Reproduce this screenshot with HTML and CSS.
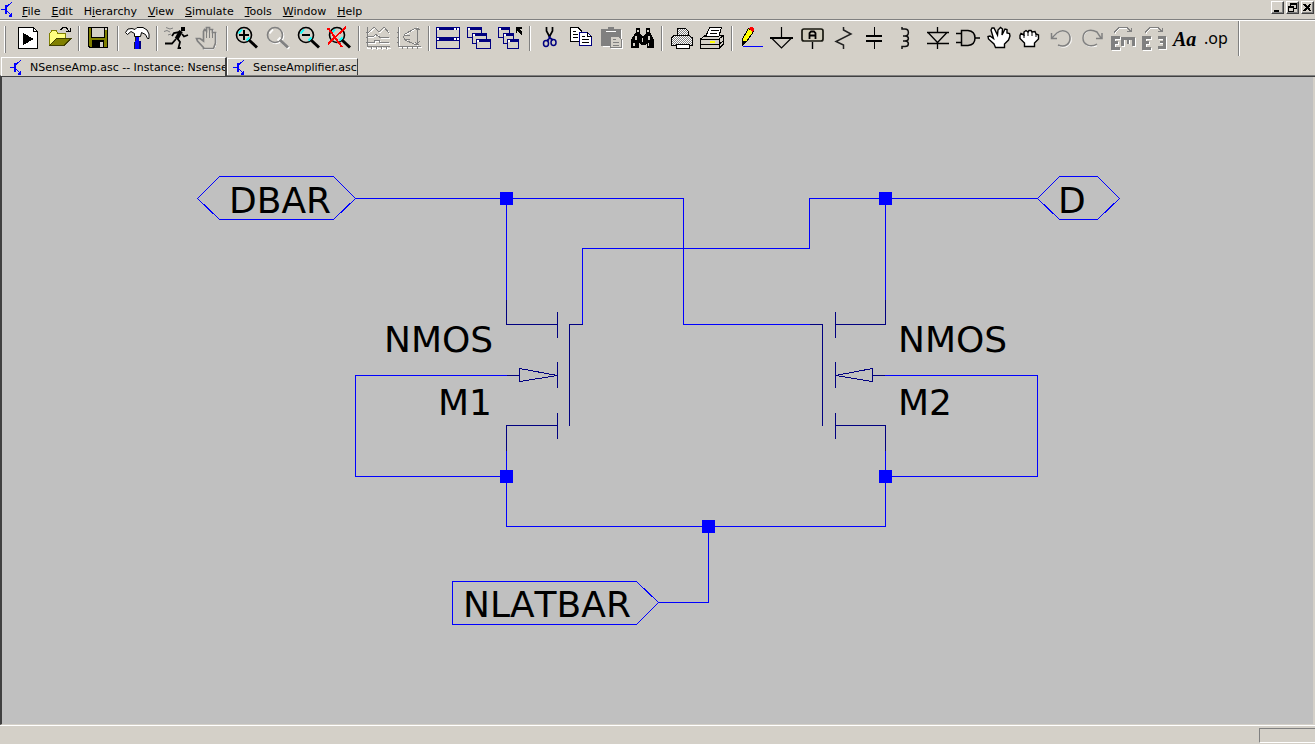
FILE: index.html
```html
<!DOCTYPE html>
<html lang="en">
<head>
<meta charset="utf-8">
<title>NSenseAmp.asc</title>
<link rel="stylesheet" href="styles.css">
</head>
<body>
<svg class="symbols" aria-hidden="true">
  <symbol id="logo" viewBox="0 0 14 17"><path d="M1 8.500H5M7 5.500L12 1M7 10L12 15" fill="none" stroke="#00f"/><path d="M5 4h2v9H5zM9 14H11V12H12V16H9Z" fill="#00f"/></symbol>
  <symbol id="lens" viewBox="0 0 25 24"><g shape-rendering="auto"><circle cx="10" cy="9" r="7.500" fill="#d4d0c8" stroke="currentColor" stroke-width="1.600"/><path d="M4.500 7.500L8 3.500M12.500 14.500L15.500 11.500" stroke="var(--glint)" stroke-width="1.800"/><path d="M15.500 14.500L23 21.500" stroke="currentColor" stroke-width="3"/></g></symbol>
  <symbol id="lettere" viewBox="0 0 9 14"><path d="M0 0H9V3H4V5H7V8H4V11H9V14H0Z"/></symbol>
</svg>
<header class="menubar">
  <svg class="logo" aria-hidden="true"><use href="#logo"/></svg>
  <nav class="menus">
    <button class="menu"><u>F</u>ile</button>
    <button class="menu"><u>E</u>dit</button>
    <button class="menu">H<u>i</u>erarchy</button>
    <button class="menu"><u>V</u>iew</button>
    <button class="menu"><u>S</u>imulate</button>
    <button class="menu"><u>T</u>ools</button>
    <button class="menu"><u>W</u>indow</button>
    <button class="menu"><u>H</u>elp</button>
  </nav>
  <div class="controls">
    <button class="control" aria-label="Minimize"><svg viewBox="0 0 11 11"><path d="M2 8h5v2H2z"/></svg></button>
    <button class="control" aria-label="Restore"><svg viewBox="0 0 11 11"><path d="M3 1h7v6H7v3H1V4h2zM4 3v1h3v2h2V3zM2 6v3h4V6z" fill-rule="evenodd"/></svg></button>
    <button class="control" aria-label="Close"><svg viewBox="0 0 11 11"><path d="M2 2L8.500 9M8.500 2L2 9" stroke="#000" stroke-width="2"/></svg></button>
  </div>
</header>

<div class="toolbar" role="toolbar">
  <span class="grip"></span>
  <button class="tool" aria-label="Run"><svg viewBox="0 0 25 24"><path d="M2.500 1.500H17.500L21.500 5.500V22.500H2.500Z" fill="#fff" stroke="#000"/><path d="M17.500 1.500V5.500H21.500" fill="none" stroke="#000"/><path d="M7 7L18 13L7 19Z"/></svg></button>
  <button class="tool" aria-label="Open"><svg viewBox="0 0 25 24"><path d="M2.500 19V7.500L5 4.500H9L11 7.500H18V13" fill="#ffff80" stroke="#808000"/><path d="M2.500 19.500L9.500 12.500H24L17 19.500Z" fill="#808000" stroke="#404000"/><path d="M13.500 4L16 1.500H19L22.500 5.500M19 5.500H23.500V2" fill="none" stroke="#000"/></svg></button>
  <span class="separator"></span>
  <button class="tool" aria-label="Save"><svg viewBox="0 0 25 24"><path d="M2.500 1.500H21.500V21.500H4L2.500 20Z" fill="#808000" stroke="#000"/><path d="M5.500 1.500H18.500V11.500H5.500Z" fill="#d4d0c8" stroke="#000"/><path d="M6 14H18V21H6Z"/><path d="M14 16h3v5h-3zM19 2h2v2h-2z" fill="#d4d0c8"/></svg></button>
  <span class="separator"></span>
  <button class="tool" aria-label="Control panel"><svg viewBox="0 0 25 24"><g shape-rendering="auto"><path d="M10 9H12V23H9V16H10Z" fill="#222"/><path d="M11 10H14V15H16V23H10V15H11Z" fill="#00f"/><path d="M14 15H16V23H14Z" fill="#000080"/><path d="M.5 6.500L3 3L7 2.500L10 3.500L12 1.500H18L22 4L24 8V12.500H22.500L20.500 8.500L16.500 6.500L15.500 10.500H9.500V7.500L6 5.500L2.500 8.500Z" fill="#fff" stroke="#000"/></g></svg></button>
  <span class="separator"></span>
  <button class="tool" aria-label="Simulate"><svg viewBox="0 0 25 24"><g shape-rendering="auto"><path d="M17 1h4v4h-4z"/><path d="M17 5L12.500 13" stroke="#000" stroke-width="4"/><path d="M16 6L10 7L8 10M18 8L20 10.500L24 9M12 13L8 17.500H1M13 12L16 16L14.500 22H17" fill="none" stroke="#000" stroke-width="1.800"/><path d="M2 1.500L6 3L9 2M0 5.500L3 4.500L6 6M4 9L7 8" fill="none" stroke="#808080"/></g></svg></button>
  <button class="tool" aria-label="Halt"><svg viewBox="0 0 25 24"><path d="M9 22L4 16L3 13H6L9 16V6L10 4L12 6V3H15V4H18V7H21V18L19 23H9Z" fill="none" stroke="#fff"/><path d="M8.500 21.500L2.500 15L1.500 12.500H5L8.500 15V5.500L9.500 3.500L11.500 5V1.500H14.500V3.500H17.500V6.500H20.500V17L18.500 22.500H8.500Z" fill="#d4d0c8" stroke="#808080" stroke-width="1.700" shape-rendering="auto"/><path d="M11.500 5V12M14.500 3V12M17.500 6V12" stroke="#808080"/></svg></button>
  <span class="separator"></span>
  <button class="tool" aria-label="Zoom in"><svg viewBox="0 0 25 24"><use href="#lens"/><path d="M5 8H15V10H5ZM9 4H11V14H9Z"/></svg></button>
  <button class="tool off" aria-label="Pan"><svg viewBox="0 0 25 24"><use class="shine" href="#lens" x="1" y="1"/><use href="#lens"/></svg></button>
  <button class="tool" aria-label="Zoom out"><svg viewBox="0 0 25 24"><use href="#lens"/><path d="M6 8H14V10H6Z"/></svg></button>
  <button class="tool" aria-label="Zoom full extents"><svg viewBox="0 0 25 24"><use href="#lens"/><path d="M1 2L15 21M19 1L1 18M0 3H3" fill="none" stroke="#f00" stroke-width="2"/></svg></button>
  <span class="separator"></span>
  <button class="tool" aria-label="Autorange"><svg viewBox="0 0 25 24"><path class="lit" d="M1.500 2V22.500H25M2 8L9 2L14 7L19 2L24 8M2 11H8L11 9L15 12H24M2 17H9V15H14V17H24M6 20V24M11 20V24M16 20V24M21 20V24"/><path class="dim" d="M1.500 1V20.500H24M2 7L8 1L13 6L18 1L23 7M2 10.500H7L10 8.500L14 11.500H23M2 16.500H8.500V14.500H13.500V16.500H23M0 6.500H2M0 11.500H2M0 16.500H2M5.500 20V23M10.500 20V23M15.500 20V23M20.500 20V23"/></svg></button>
  <button class="tool" aria-label="Smith chart"><svg viewBox="0 0 25 24"><path class="lit" d="M2.500 1V21.500H25M8 9L20 2V19L8 14"/><path class="dim" d="M1.500 1V20.500H24M20.500 2V18M22 2.500H18L8 8L6.500 11L8 14L18 18.500H22M8 9.500H13M8 13.500H13M19 4L20 2L23 4M18 16L20 18L23 15M0 6.500H2M0 11.500H2M0 16.500H2M5.500 20V23M10.500 20V23M15.500 20V23M20.500 20V23"/></svg></button>
  <span class="separator"></span>
  <button class="tool" aria-label="Tile windows"><svg viewBox="0 0 25 24"><path d="M0 1H24V23H0ZM1 4V11H23V4ZM1 15V22H23V15Z" fill="#000080" fill-rule="evenodd"/><path d="M1 2h2v2H1zM18 2h2v2h-2zM21 2h2v2h-2zM1 12h2v2H1zM18 12h2v2h-2zM21 12h2v2h-2z" fill="#fff"/></svg></button>
  <button class="tool" aria-label="Cascade windows"><svg viewBox="0 0 25 24"><path d="M.5 1.500H14.500V11.500H.5Z" class="win"/><path d="M0 1H15V4H0Z" class="winbar"/><path d="M5.500 7.500H19.500V17.500H5.500Z" class="win"/><path d="M5 7H20V10H5Z" class="winbar"/><path d="M9.500 13.500H23.500V22.500H9.500Z" class="win"/><path d="M9 13H24V16H9Z" class="winbar"/><path d="M1 2h2v2H1zM6 8h2v2H6zM10 14h2v2h-2z" fill="#fff"/></svg></button>
  <button class="tool" aria-label="Close all windows"><svg viewBox="0 0 25 24"><path d="M.5 1.500H11.500V11.500H.5Z" class="win"/><path d="M0 1H12V4H0Z" class="winbar"/><path d="M5.500 7.500H15.500V17.500H5.500Z" class="win"/><path d="M5 7H16V10H5Z" class="winbar"/><path d="M9.500 13.500H20.500V22.500H9.500Z" class="win"/><path d="M9 13H21V16H9Z" class="winbar"/><path d="M1 2h2v2H1zM6 8h2v2H6zM10 14h2v2h-2z" fill="#fff"/><path d="M18 1H24V3H21L24 6V9H23L19 5V7H18Z"/></svg></button>
  <span class="separator"></span>
  <button class="tool" aria-label="Cut"><svg viewBox="0 0 25 24"><g fill="none" shape-rendering="auto"><path d="M9.500 1V5L13 11.500M15.500 1V5L12 11.500" stroke="#000" stroke-width="1.700"/><path d="M12.500 10V13M12 13L10 15M13 12L16 14" stroke="#000080" stroke-width="2"/><ellipse cx="9" cy="17.500" rx="2.500" ry="3" stroke="#000080" stroke-width="1.500"/><ellipse cx="16.500" cy="16.500" rx="2.500" ry="3" stroke="#000080" stroke-width="1.500"/></g></svg></button>
  <button class="tool" aria-label="Copy"><svg viewBox="0 0 25 24"><path d="M2.500 1.500H10L13.500 5V15.500H2.500Z" fill="#fff" stroke="#000"/><path d="M5 5.500H8M5 8.500H10M5 11.500H10" stroke="#000"/><path d="M11.500 6.500H19.500L23.500 10.500V19.500H11.500Z" fill="#fff" stroke="#000080"/><path d="M19.500 6V10.500H24M14 10.500H17M14 13.500H21M14 16.500H21" fill="none" stroke="#000"/></svg></button>
  <button class="tool" aria-label="Paste"><svg viewBox="0 0 25 24"><path d="M4 4H23V21H4Z" fill="#fff"/><path d="M2 3H9V1H15V3H22V20H2Z" fill="#808080"/><path d="M7 5.500H17" stroke="#fff"/><path d="M12.500 11.500H20L23.500 15V22.500H12.500Z" fill="#d4d0c8" stroke="#fff"/><path d="M11.500 10.500H20L22.500 14V21.500H11.500Z" fill="#d4d0c8" stroke="#808080"/><path d="M14 13.500H17M14 16.500H20M14 19.500H20" stroke="#808080"/></svg></button>
  <button class="tool" aria-label="Find"><svg viewBox="0 0 25 24"><path d="M6 2H10V7L12 10H14L16 7V2H20V6L22 10L24 14V22H17V17L15 19H11L9 17V22H1V14L4 9L6 6Z"/><path d="M7 4h2v2H7zM17 4h2v2h-2zM5 10h2v4H5zM18 10h2v4h-2zM3 17h2v3H3zM12 12h1v4h-1zM18 17h1v3h-1z" fill="#d4d0c8"/></svg></button>
  <span class="separator"></span>
  <button class="tool" aria-label="Print preview"><svg viewBox="0 0 25 24"><defs><pattern id="dots" width="2" height="2" patternUnits="userSpaceOnUse"><path d="M0 0h2v2H0z" fill="#fff"/><path d="M0 0h1v1H0zM1 1h1v1H1z" fill="#808080"/></pattern></defs><path d="M8.500 9V2.500H16.500L19.500 5.500V9M7.500 9.500H20.500L23.500 12V19.500H20V18H7V19.500H2.500V12L5 9.500Z" fill="url(#dots)" stroke="#000"/><path d="M7.500 18.500H20.500V22.500H7.500Z" fill="#fff" stroke="#000"/></svg></button>
  <button class="tool" aria-label="Print"><svg viewBox="0 0 25 24"><path d="M.5 13L5 9.500H23.500V18L19 22.500H.5Z" fill="#d4d0c8" stroke="#000"/><path d="M6 10L9.500 1.500H21.500L19 10Z" fill="#fff" stroke="#000"/><path d="M11 4.500H19M10 7.500H17M1 13.500H19.500V22M19 13L23.500 9.500M1 18.500H19L23 15" fill="none" stroke="#000"/><path d="M10 15h5v2h-5z" fill="#ff0"/></svg></button>
  <span class="separator"></span>
  <button class="tool" aria-label="Wire"><svg viewBox="0 0 25 24"><path d="M4 20.500H24" stroke="#00f"/><path d="M3.500 18.500V13L9.500 2.500L14.500 5.500L8 15Z" fill="#ff0" stroke="#000"/><path d="M3 14L8 16L3 20Z"/><path d="M10 2L12 1H14L15 3V5L13 6Z" fill="#f00"/></svg></button>
  <button class="tool" aria-label="Ground"><svg viewBox="0 0 25 24"><path d="M11.500 1V12M1 11.500L11.500 22L22 11.500" fill="none" stroke="#000" stroke-width="1.200" shape-rendering="auto"/><path d="M0 11h23v2H0z"/></svg></button>
  <button class="tool" aria-label="Label net"><svg viewBox="0 0 25 24"><g shape-rendering="auto"><path d="M11.500 16V23" stroke="#000" stroke-width="1.400"/><rect x="1" y="3" width="21" height="12" rx="2" fill="#d0ccbc" stroke="#181810" stroke-width="1.700"/><path d="M8.500 13V7L10 5.500H13L14.500 7V13M8.500 9.500H14.500" fill="none" stroke="#000" stroke-width="1.800"/></g></svg></button>
  <button class="tool" aria-label="Resistor"><svg viewBox="0 0 25 24"><path d="M11.500 1V4L19 8L4 15.500L11.500 19V23" fill="none" stroke="#222" stroke-width="1.500" shape-rendering="auto"/></svg></button>
  <button class="tool" aria-label="Capacitor"><svg viewBox="0 0 25 24"><path d="M11 1h1v8h-1zM3 9h16v2H3zM3 14h16v2H3zM11 16h1v7h-1z"/></svg></button>
  <button class="tool" aria-label="Inductor"><svg viewBox="0 0 25 24"><path d="M8 1V3H11C15.500 3 15.500 10 11 10H9M11 10C15.500 10 15.500 15 11 15H9M11 15C15.500 15 15.500 20.500 11 20.500H8V23" fill="none" stroke="#111" stroke-width="1.500" shape-rendering="auto"/></svg></button>
  <button class="tool" aria-label="Diode"><svg viewBox="0 0 25 24"><path d="M12.500 1V6M2 6.500H24M3 6.500L12.500 16.500L22 6.500M2 17.500H24M12.500 17V23" fill="none" stroke="#000" stroke-width="1.300" shape-rendering="auto"/></svg></button>
  <button class="tool" aria-label="Component"><svg viewBox="0 0 25 24"><g shape-rendering="auto"><path d="M0 7.500H5M0 16.500H5M19 12H24" stroke="#000" stroke-width="1.500"/><path d="M5.500 4.500H12C17 5 19 8 19 12C19 16 17 19 12 19.500H5.500Z" fill="#c8c4bc" stroke="#000" stroke-width="1.500"/></g></svg></button>
  <button class="tool" aria-label="Move"><svg viewBox="0 0 25 24"><path d="M8.500 21.500L7 18L1.500 13L1 10.500L3 10L6.500 12.500L4 4L5 2H7L10.500 9L11 4L13.500 1.500L15.500 3L15 9L18 3L20 3.500V7L22.500 7.500L23 10L21.500 14L17.500 18V21.500Z" fill="#fff" stroke="#000" stroke-width="1.400" shape-rendering="auto"/></svg></button>
  <button class="tool" aria-label="Drag"><svg viewBox="0 0 25 24"><g shape-rendering="auto" stroke="#000"><path d="M6.500 20.500V17L2 12.500V9.500L3 7.500L6 9V6L8 4.500L10 6L11 4.500H13L14 6L17 5.500L18 8L20.500 9V13L16.500 17V20.500Z" fill="#fff" stroke-width="1.400"/><path d="M6 9V12M10 6V10M14 6V10M18 8V11"/></g></svg></button>
  <button class="tool" aria-label="Undo"><svg viewBox="0 0 25 24"><g shape-rendering="auto"><path class="lit" d="M4 12L10 6C17 2 24 9 22 16C19 22 14 22 10 20"/><path class="dim wide" d="M2.500 7V12.500H8M3 12L8 7C14 2 21 6 21 12C21 18 16 22 9 19"/></g></svg></button>
  <button class="tool" aria-label="Redo"><svg viewBox="0 0 25 24"><g shape-rendering="auto"><path class="lit" d="M20 11C17 2 8 3 4 9C1 17 8 23 17 20"/><path class="dim wide" d="M22 7V12.500H16M21 12L17 6C10 2 3 5 3 12C3 19 11 22 17 18"/></g></svg></button>
  <button class="tool" aria-label="Rotate"><svg viewBox="0 0 25 24"><use href="#lettere" x="1" y="11" width="9" height="14" fill="#fff"/><use href="#lettere" x="0" y="10" width="9" height="14" fill="#808080"/><path d="M11 12H25V21H22V14H19V18H16V14H14V21H11Z" fill="#fff"/><path d="M10 11H24V20H21V14H18V18H16V14H13V20H10Z" fill="#808080"/><path class="lit" d="M4 7.500L8 2.500H16"/><path class="dim" d="M3 6.500L8 1.500H16L20 5.500M16 5.500H20.500V2"/></svg></button>
  <button class="tool" aria-label="Mirror"><svg viewBox="0 0 25 24"><use href="#lettere" x="1" y="11" width="9" height="14" fill="#fff"/><use href="#lettere" x="0" y="10" width="9" height="14" fill="#808080"/><path d="M17 11H25V24H17V21H21V18H18V16H21V14H17Z" fill="#fff"/><path d="M16 10H24V23H16V20H21V17H18V15H21V13H16Z" fill="#808080"/><path class="lit" d="M4 7.500L8 2.500H16"/><path class="dim" d="M3 6.500L8 1.500H16L20 5.500M16 5.500H20.500V2"/></svg></button>
  <button class="tool aa" aria-label="Text">Aa</button>
  <button class="tool op" aria-label="SPICE directive">.op</button>
  <span class="separator end"></span>
</div>

<div class="tabs" role="tablist">
  <button class="tab active" role="tab" aria-selected="true"><svg class="logo" aria-hidden="true"><use href="#logo"/></svg><span class="label">NSenseAmp.asc -- Instance: Nsense</span></button>
  <button class="tab" role="tab" aria-selected="false"><svg class="logo" aria-hidden="true"><use href="#logo"/></svg><span class="label">SenseAmplifier.asc</span></button>
</div>

<main class="sheet">
  <svg class="schematic" viewBox="2 77 1311 647" role="img" aria-label="Sense amplifier schematic">
    <g class="wire">
      <path d="M355 198.500H683.500V324.500H810M506.500 198V300M582.500 324V248.500H809.500V198.500H1038M885.500 198V300"/>
      <path d="M507 375.500H355.500V476.500H506.500M506.500 451V526.500H885.500V451M885 375.500H1037.500V476.500H885M708.500 526V602.500H658"/>
      <path d="M197.500 198.500L219.500 176.500H333.500L355.500 198.500L333.500 219.500H219.500Z"/>
      <path d="M1037.500 198.500L1059.500 176.500H1097.500L1119.500 198.500L1097.500 219.500H1059.500Z"/>
      <path d="M452.500 581.500H636.500L658.500 602.500L636.500 624.500H452.500Z"/>
    </g>
    <g class="part">
      <path d="M506.500 300V324.500H557M557.500 312V338M557.500 362V388M557.500 413V439M557 425.500H506.500V451M507 375.500H519M519.500 368.500V381.500L557.500 375.500ZM569.500 426V324.500H583"/>
      <path d="M885.500 300V324.500H836M835.500 312V338M835.500 362V388M835.500 413V439M836 425.500H885.500V451M885 375.500H873M872.500 368.500V381.500L835.500 375.500ZM822.500 426V324.500H810"/>
    </g>
    <path class="node" d="M500 192h13v13h-13zM879 192h13v13h-13zM500 470h13v13h-13zM879 470h13v13h-13zM702 520h13v13h-13z"/>
    <g class="caption">
      <text x="229" y="213">DBAR</text>
      <text x="1058" y="213">D</text>
      <text x="384" y="352">NMOS</text>
      <text x="438" y="415">M1</text>
      <text x="898" y="352">NMOS</text>
      <text x="898" y="415">M2</text>
      <text x="463" y="617">NLATBAR</text>
    </g>
  </svg>
</main>
<footer class="status"><span class="panel"></span></footer>
</body>
</html>
```

FILE: styles.css
```css
* { box-sizing: border-box; }
html, body { height: 100%; }
body {
  margin: 0;
  display: flex;
  flex-direction: column;
  overflow: hidden;
  background: #d4d0c8;
  color: #000;
  font-family: "DejaVu Sans", sans-serif;
  font-size: 11px;
}
button {
  margin: 0;
  padding: 0;
  border: 0;
  background: none;
  color: inherit;
  font: inherit;
}
svg { display: block; flex: none; shape-rendering: crispEdges; }
.symbols { position: absolute; width: 0; height: 0; }
.logo { width: 14px; height: 17px; }

.menubar {
  display: flex;
  align-items: center;
  height: 21px;
  flex: none;
  padding: 0 0 1px;
  border-bottom: 1px solid #fff;
  box-shadow: inset 0 -1px #808080;
}
.menus { display: flex; gap: 11px; padding: 4px 0 0 8px; }
.menu { line-height: 16px; }
.controls { display: flex; gap: 2px; margin-left: auto; padding: 0 1px 4px 0; }
.control {
  width: 13px;
  height: 13px;
  border: 1px solid;
  border-color: #fff #404040 #404040 #fff;
  box-shadow: inset -1px -1px #808080;
}
.control svg { width: 11px; height: 11px; }

.toolbar {
  display: flex;
  align-items: flex-start;
  flex: none;
  height: 36px;
  padding: 5px 0 0 4px;
}
.grip {
  width: 2px;
  height: 27px;
  margin-right: 7px;
  border-left: 1px solid #fff;
  border-right: 1px solid #808080;
}
.tool {
  display: flex;
  flex: none;
  width: 31px;
  height: 24px;
  padding-left: 3px;
  --glint: #0ff;
}
.tool svg { width: 25px; height: 24px; overflow: visible; }
.off { color: #808080; --glint: #fff; }
.shine { color: #fff; }
.lit, .dim { fill: none; stroke: #fff; }
.dim { stroke: #808080; }
.wide { stroke-width: 1.5px; }
.win { fill: #d4d0c8; stroke: #000080; }
.winbar { fill: #000080; }
.aa { font: italic bold 20px/26px "Liberation Serif", serif; }
.op { font: 16px/24px "Noto Sans", sans-serif; }
.separator {
  flex: none;
  width: 2px;
  height: 25px;
  margin: 0 3px 0 3px;
  border-left: 1px solid #808080;
  border-right: 1px solid #fff;
}
.end { height: 35px; margin-top: -5px; margin-left: 6px; }

.tabs {
  display: flex;
  align-items: flex-end;
  flex: none;
  height: 20px;
  padding-left: 1px;
  border-bottom: 1px solid #404040;
  box-shadow: inset 0 -1px #808080;
}
.tab {
  display: flex;
  align-items: center;
  gap: 7px;
  height: 17px;
  padding-left: 4px;
  border-top: 1px solid #fff;
  border-left: 1px solid #fff;
  border-right: 1px solid #404040;
  overflow: hidden;
  white-space: nowrap;
  background: #d4d0c8;
  margin-bottom: 1px;
}
.tab.active {
  width: 226px;
  height: 19px;
  padding: 0 0 0 7px;
  border-right-width: 2px;
  margin-bottom: 0;
}
.label { padding-top: 2px; line-height: 16px; }

.sheet {
  flex: 1;
  min-height: 0;
  background: #c0c0c0;
  border: solid #d4d0c8;
  border-width: 0 2px 1px;
  border-left-color: #404040;
  box-shadow: -1px 0 #808080;
}
.schematic { width: 100%; height: 100%; }
.wire, .part { fill: none; stroke: #00f; }
.part { stroke: #000080; }
.node { fill: #00f; }
.caption { font-size: 36px; font-kerning: none; }

.status {
  display: flex;
  justify-content: flex-end;
  flex: none;
  height: 19px;
  padding-top: 2px;
  border-top: 1px solid #fff;
}
.panel {
  width: 56px;
  height: 15px;
  border-top: 1px solid #808080;
  border-left: 1px solid #808080;
  border-bottom: 1px solid #fff;
}
```
